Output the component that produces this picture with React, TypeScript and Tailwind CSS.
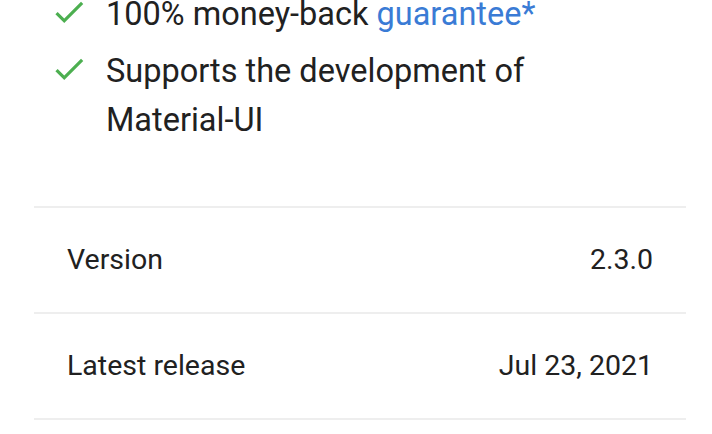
import React from "react";

const features = [
  { id: 1, text: "100% money-back ", link: "guarantee*" },
  { id: 2, text: "Supports the development of Material-UI", link: "" },
];

const details = [
  { label: "Version", value: "2.3.0" },
  { label: "Latest release", value: "Jul 23, 2021" },
];

// material "check" icon
const CheckIcon = () => (
  <svg viewBox="0 0 24 24" className="w-[38px] h-[38px] shrink-0 fill-[#4caf50]">
    <path d="M9 16.17L4.83 12l-1.42 1.41L9 19 21 7l-1.41-1.41z" />
  </svg>
);

export default function App() {
  return (
    <div className="min-h-screen bg-white overflow-hidden font-['Roboto','Liberation_Sans',sans-serif] text-[#212121]">
      <div className="ml-[34px] w-[652px]">
        <ul className="-mt-[10px] flex flex-col gap-[8px] pl-[16px] pr-[40px]">
          {features.map((f) => (
            <li key={f.id} className="flex items-start gap-[18px]">
              <div className="mt-[3px]">
                <CheckIcon />
              </div>
              <span className="text-[32.5px] leading-[49px]">
                {f.text}
                {f.link && <a className="text-[#3a7bd5]">{f.link}</a>}
              </span>
            </li>
          ))}
        </ul>

        <div className="mt-[61px] border-t-2 border-[#eeeeee]">
          {details.map((d) => (
            <div
              key={d.label}
              className="h-[106px] flex items-center justify-between px-[33px] border-b-2 border-[#eeeeee] text-[28.5px]"
            >
              <span>{d.label}</span>
              <span>{d.value}</span>
            </div>
          ))}
        </div>
      </div>
    </div>
  );
}
